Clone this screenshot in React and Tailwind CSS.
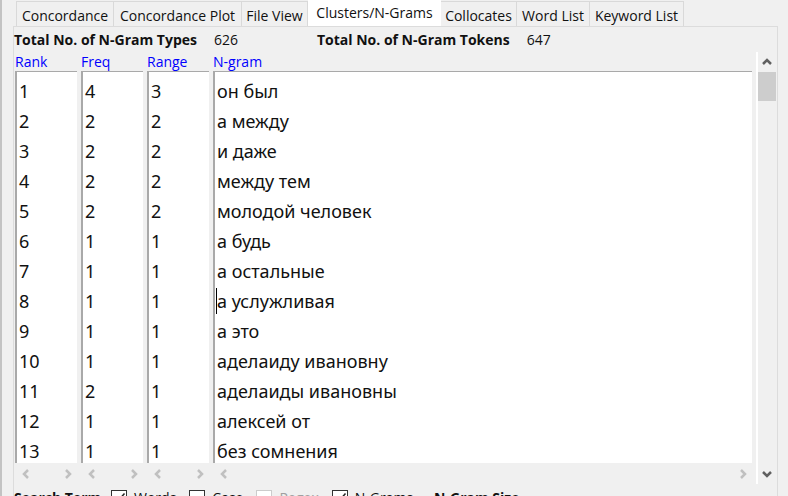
const tabs = [
  { label: "Concordance", width: "w-[98px]" },
  { label: "Concordance Plot", width: "w-[128px]" },
  { label: "File View", width: "w-[66px]" },
  { label: "Clusters/N-Grams", width: "w-[133px]", active: true },
  { label: "Collocates", width: "w-[76px]" },
  { label: "Word List", width: "w-[73px]" },
  { label: "Keyword List", width: "w-[94px]" },
];

const columns = ["Rank", "Freq", "Range", "N-gram"];

const rows = [
  [1, 4, 3, "он был"],
  [2, 2, 2, "а между"],
  [3, 2, 2, "и даже"],
  [4, 2, 2, "между тем"],
  [5, 2, 2, "молодой человек"],
  [6, 1, 1, "а будь"],
  [7, 1, 1, "а остальные"],
  [8, 1, 1, "а услужливая"],
  [9, 1, 1, "а это"],
  [10, 1, 1, "аделаиду ивановну"],
  [11, 2, 1, "аделаиды ивановны"],
  [12, 1, 1, "алексей от"],
  [13, 1, 1, "без сомнения"],
];

const caretRow = 8;

const arrowPaths = {
  left: "M7 1 L3 5 L7 9",
  right: "M3 1 L7 5 L3 9",
  up: "M1 7 L5 3 L9 7",
  down: "M1 3 L5 7 L9 3",
};

function rowPadding(index) {
  if (index === 0) return "border-t pt-2 pb-1";
  if (index === rows.length - 1) return "pt-1 pb-px";
  return "py-1";
}

function Arrow({ direction, className }) {
  return (
    <button type="button" aria-label={`Scroll ${direction}`} className={`flex items-center justify-center ${className}`}>
      <svg viewBox="0 0 10 10" className="size-[10px]" fill="none" stroke="currentColor" strokeWidth="2.500">
        <path d={arrowPaths[direction]} />
      </svg>
    </button>
  );
}

function Check({ label, checked = false, disabled = false }) {
  return (
    <label className={`flex items-center gap-[7px] ${disabled ? "text-[#a0a0a0]" : ""}`}>
      <span className="grid size-4">
        <input
          type="checkbox"
          defaultChecked={checked}
          disabled={disabled}
          className="peer col-start-1 row-start-1 size-4 appearance-none border border-[#333333] bg-white disabled:border-[#cccccc]"
        />
        <svg
          viewBox="0 0 16 16"
          className="pointer-events-none invisible col-start-1 row-start-1 size-4 peer-checked:visible"
          fill="none"
          stroke="#222222"
          strokeWidth="1.500"
        >
          <path d="M3 8 L6.500 11.500 L13.500 3.500" />
        </svg>
      </span>
      {label}
    </label>
  );
}

export default function App() {
  return (
    <div className="flex h-screen overflow-hidden border-l-2 border-[#c3c3c3] bg-[#f0f0f0] pr-[10px] pl-[11px] font-['Open_Sans','Noto_Sans',sans-serif] text-[14px] leading-5 text-[#111111]">
      <main className="min-w-0 flex-1">
        <div role="tablist" className="flex h-[26px] items-end pl-[3px]">
          {tabs.map((tab) => (
            <button
              key={tab.label}
              type="button"
              role="tab"
              aria-selected={!!tab.active}
              className={`shrink-0 whitespace-nowrap ${tab.width} ${
                tab.active ? "h-[26px] bg-white" : "h-[25px] border-t border-r border-[#d9d9d9] pt-1 first:border-l"
              }`}
            >
              {tab.label}
            </button>
          ))}
        </div>

        <section className="h-screen border-t border-r border-l border-[#dcdcdc]">
          <div className="flex h-[25px] items-center whitespace-nowrap">
            <div className="flex w-[303px] gap-[17px]">
              <span className="font-bold">Total No. of N-Gram Types</span>
              <span>626</span>
            </div>
            <div className="flex gap-[17px]">
              <span className="font-bold">Total No. of N-Gram Tokens</span>
              <span>647</span>
            </div>
          </div>

          <div className="flex">
            <table className="-ml-[3px] min-w-0 flex-1 table-fixed border-separate border-spacing-x-1 border-spacing-y-0">
              <colgroup>
                <col className="w-[62px]" />
                <col className="w-[62px]" />
                <col className="w-[62px]" />
                <col />
              </colgroup>
              <thead>
                <tr>
                  {columns.map((name) => (
                    <th key={name} scope="col" className="h-[19px] p-0 text-left leading-[19px] font-normal text-[#0000ff]">
                      {name}
                    </th>
                  ))}
                </tr>
              </thead>
              <tbody className="font-['Noto_Sans','Open_Sans',sans-serif] text-[18px] leading-[22px]">
                {rows.map((row, index) => (
                  <tr key={row[0]}>
                    {row.map((value, column) => (
                      <td
                        key={column}
                        className={`border-l-2 border-[#a9a9a9] bg-white pl-[2px] whitespace-nowrap ${rowPadding(index)}`}
                      >
                        {column === 3 && row[0] === caretRow ? (
                          <span className="-ml-px flex items-center">
                            <span className="-my-[2px] h-[26px] w-px bg-black" />
                            {value}
                          </span>
                        ) : (
                          value
                        )}
                      </td>
                    ))}
                  </tr>
                ))}
              </tbody>
              <tfoot>
                <tr>
                  {columns.map((name) => (
                    <td key={name} className="p-0">
                      <div className="flex h-[21px] items-center justify-between pr-[2px] pl-1 text-[#c0c0c0]">
                        <Arrow direction="left" className="size-[14px]" />
                        <Arrow direction="right" className="size-[14px]" />
                      </div>
                    </td>
                  ))}
                </tr>
              </tfoot>
            </table>
            <div className="mr-px flex w-[20px] flex-col border-l-2 border-white text-[#606060]">
              <Arrow direction="up" className="h-[20px] w-full" />
              <div className="h-[29px] bg-[#cdcdcd]" />
              <Arrow direction="down" className="mt-auto h-[20px] w-full" />
            </div>
          </div>

          <div className="flex items-center gap-[9px] pt-1 whitespace-nowrap">
            <span className="w-[88px] font-bold">Search Term</span>
            <div className="flex gap-[13px]">
              <Check label="Words" checked />
              <Check label="Case" />
              <Check label="Regex" disabled />
              <Check label="N-Grams" checked />
            </div>
            <span className="pl-3 font-bold">N-Gram Size</span>
          </div>
        </section>
      </main>
    </div>
  );
}
